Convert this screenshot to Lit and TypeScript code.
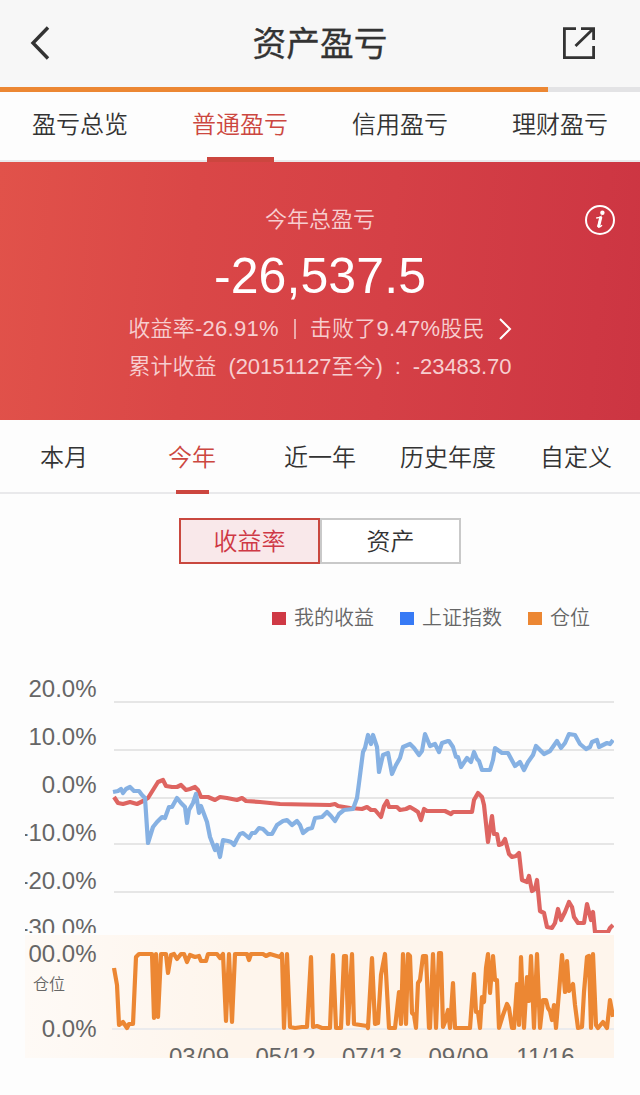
import { LitElement, html, css, svg } from "lit";
import { customElement, state } from "lit/decorators.js";

const GRID = [702, 750, 798, 844, 892];
const LABELS: [number, string][] = [
  [697, "20.0%"], [745, "10.0%"], [793, "0.0%"], [841, "-10.0%"], [888.5, "-20.0%"], [936, "-30.0%"],
];
const DATES: [number, string][] = [
  [199, "03/09"], [285.5, "05/12"], [372, "07/13"], [458.5, "09/09"], [545.5, "11/16"],
];

const INDEX =
  "113,792 118,791 121,789 123,793 126,789 130,787 134,791 139,791 142,795 145,798 148,843 153,827 157,822 162,817 165,818 169,807 172,807 177,798 181,803 185,807 187,823 189,810 193,803 196,794 199,813 201,806 207,822 210,837 215,850 217,845 220,857 223,840 228,841 231,842 234,845 237,839 240,834 243,833 249,838 252,833 255,833 259,828 263,829 268,834 272,834 277,825 283,821 287,820 292,825 297,821 300,825 303,833 308,829 312,828 315,818 322,817 327,812 331,816 335,821 339,814 344,810 353,809 357,798 359,783 363,752 365,748 368,735 371,744 373,735 377,747 379,772 383,755 388,753 392,774 396,765 400,758 403,747 410,744 414,748 419,755 422,751 425,734 430,746 435,744 439,752 442,743 448,741 449,741 453,747 456,757 458,757 461,767 467,758 471,762 474,752 477,759 479,761 482,770 490,770 493,760 495,748 502,753 508,753 515,766 520,762 524,770 528,762 533,755 536,746 544,754 550,751 557,741 561,748 565,743 569,734 575,735 580,744 586,749 590,747 592,742 597,740 599,747 607,743 610,744 613,740";
const MINE =
  "114,797 118,803 123,804 130,802 137,804 143,801 148,798 153,790 158,782 163,780 166,786 172,787 177,787 181,785 186,790 190,789 195,787 198,790 201,797 208,797 215,800 220,797 227,798 237,800 242,798 246,801 260,802 270,803 280,804 303,804.5 330,805 335,804 338,806 350,808 362,809 367,807 371,810 375,810 381,817 384,806 387,801 389,807 397,807 400,810 406,809 410,807 415,810 418,812 421,820 424,809 427,811 445,811 451,814 453,812 472,812 474,800 478,793 482,797 484,805 488,842 492,816 494,834 497,834 499,845 502,844 505,839 509,854 512,857 516,856 519,853 522,880 527,882 529,876 532,891 535,889 537,880 540,911 544,913 547,927 552,928 555,923 558,909 561,920 565,912 569,902 572,907 574,917 578,923 584,923 587,904 591,920 593,912 595,932 608,932 610,928 613,925";
const POSITION =
  "114,968 117,985 119,1025 123,1022 127,1028 129,1024 133,1024 136,957 139,954 152,954 154,1018 156,954 158,1017 161,954 166,954 168,973 171,955 174,954 177,959 181,954 184,954 187,962 190,955 195,957 199,956 201,961 206,961 208,954 217,954 220,958 223,954 226,1021 229,954 232,1022 235,954 247,954 249,960 251,954 263,954 266,956 270,954 280,957 282,954 284,1028 287,954 290,1027 295,1028 302,1027 307,1027 311,957 313,1027 317,1026 322,1028 330,1028 333,955 336,1028 341,1028 344,956 346,956 348,1024 352,954 354,1024 367,1026 368,1028 372,958 375,1024 378,1023 381,975 385,954 389,1028 395,1028 399,992 401,1024 403,954 406,1024 408,954 410,956 412,1013 414,1015 416,1028 418,983 420,980 423,956 426,956 429,1028 430,1028 433,954 436,1028 439,953 441,953 443,1027 445,1022 448,1010 450,1028 453,983 455,1028 470,1028 474,974 476,1012 478,1012 480,1028 482,997 484,1002 486,968 488,954 490,993 493,956 495,980 497,980 499,1028 503,1015 507,1004 509,1008 512,1028 514,1028 517,984 519,1025 521,957 524,1028 527,977 529,1001 531,956 534,1028 537,954 540,1028 543,1000 546,1000 548,1008 550,1011 552,1020 554,1005 556,1028 559,992 562,955 565,992 567,961 569,991 573,984 575,1005 578,1028 582,1027 584,992 587,957 589,956 591,1028 593,954 596,1025 598,1028 603,1022 607,1028 610,1000 613,1017";

@customElement("app-root")
export class AppRoot extends LitElement {
  @state() private section = 1;
  @state() private period = 1;
  @state() private mode = 0;

  static styles = css`
    :host {
      display: flex;
      flex-direction: column;
      height: 1095px;
      background: #fdfdfd;
      color: #333;
      font-family: "Liberation Sans", "Noto Sans CJK SC", sans-serif;
      font-weight: 350;
    }
    * { box-sizing: border-box; }
    .head {
      height: 87px;
      flex: none;
      display: grid;
      grid-template-columns: 78px 1fr 78px;
      align-items: center;
      background: #f7f7f7;
    }
    .head svg { display: block; width: 34px; height: 34px; margin-top: -1px; }
    .back { margin-left: 30px; }
    .title { font-size: 33.7px; line-height: 50px; font-weight: 400; text-align: center; -webkit-text-stroke: .3px #333; }
    .progress { height: 5px; flex: none; background: #e3e3e5; }
    .bar { height: 100%; background: #ec8733; }
    .tabs { display: flex; flex: none; border-bottom: 2px solid #e9e9eb; font-size: 24px; }
    .tab { flex: 1; display: flex; flex-direction: column; align-items: center; white-space: nowrap; cursor: pointer; }
    .tab::after { content: ""; margin-top: auto; margin-bottom: -2px; background: transparent; z-index: 1; }
    .tab.on { color: #cc4740; }
    .tab.on::after { background: #cc463f; }
    .main { height: 70px; line-height: 36px; padding-top: 15px; }
    .main .tab::after { width: 67px; height: 5px; }
    .period { height: 74px; line-height: 36px; padding-top: 20px; }
    .period .tab::after { width: 33px; height: 4px; }
    .hero {
      height: 258px;
      flex: none;
      display: grid;
      grid-template-columns: 60px 1fr 60px;
      padding: 40px 10px 0;
      background: linear-gradient(95deg, #e1524a 0%, #da4747 30%, #d54046 60%, #ce3743 92%, #cc3542 100%);
      color: #f7ced0;
      font-size: 22px;
    }
    .info { width: 32px; height: 32px; margin: 2px 0 0 14px; }
    .summary { grid-column: 2; display: flex; flex-direction: column; align-items: center; white-space: nowrap; }
    .caption { line-height: 36px; }
    .total { font-size: 50px; line-height: 60px; margin-top: 8px; color: #fff; letter-spacing: .1px; }
    .rank { display: flex; align-items: center; line-height: 38px; margin-top: 4px; letter-spacing: .27px; }
    .sep { width: 2px; height: 20px; margin: 0 14px 0 15px; background: #eda9aa; }
    .more { width: 14px; height: 24px; margin-left: 13px; }
    .since { display: flex; line-height: 38px; letter-spacing: -.05px; }
    .range { margin-left: 12px; }
    .colon { margin: 0 12px 0 12px; }
    .modes { display: flex; flex: none; justify-content: center; margin-top: 24px; font-size: 24px; line-height: 44px; text-align: center; }
    .mode { width: 141px; height: 46px; border: 2px solid #c9c9c9; background: #fff; cursor: pointer; }
    .mode.on { border-color: #c9483f; background: #f9e8ea; color: #cf3945; }
    .legend { display: flex; flex: none; justify-content: flex-end; gap: 26px; padding-right: 50px; margin-top: 39px; font-size: 20px; line-height: 30px; color: #666; }
    .key { display: flex; align-items: center; gap: 8px; }
    .swatch { width: 14px; height: 13px; }
    .mine { background: #cf3945; }
    .index { background: #377af5; }
    .pos { background: #ec8733; }
    .chart { display: block; flex: none; width: 640px; height: 462px; }
    .axis { font-size: 24px; fill: #666; }
    .note { font-size: 16px; fill: #666; }
    .grid { stroke: #e6e6e6; stroke-width: 2; }
    .line { fill: none; stroke-width: 4.2; stroke-linejoin: round; }
  `;

  private tabs(names: string[], active: number, pick: (i: number) => void) {
    return names.map((n, i) => html`<div class="tab ${i === active ? "on" : ""}" @click=${() => pick(i)}>${n}</div>`);
  }

  private chart() {
    return html`<svg class="chart" viewBox="0 633 640 462">
      <defs>
        <clipPath id="upper"><rect x="25" y="660" width="589" height="273"/></clipPath>
        <clipPath id="lower"><rect x="25" y="935" width="589" height="123"/></clipPath>
        <linearGradient id="warm"><stop offset="0" stop-color="#fefaf6"/><stop offset=".35" stop-color="#fef5ec"/></linearGradient>
      </defs>
      <g clip-path="url(#upper)">
        ${GRID.map((y) => svg`<line class="grid" x1="114" x2="614" y1=${y} y2=${y} />`)}
        ${LABELS.map(([y, t]) => svg`<text class="axis" x="96.5" y=${y} text-anchor="end">${t}</text>`)}
        <polyline class="line" stroke="#de6561" points=${MINE} />
        <polyline class="line" stroke="#86b1e3" points=${INDEX} />
      </g>
      <g clip-path="url(#lower)">
        <rect x="25" y="935" width="589" height="123" fill="url(#warm)"/>
        <line x1="112" x2="614" y1="1029" y2="1029" stroke="#ebebed" stroke-width="2"/>
        <text class="axis" x="96.5" y="962" text-anchor="end">00.0%</text>
        <text class="axis" x="96.5" y="1037" text-anchor="end">0.0%</text>
        <text class="note" x="33" y="990">仓位</text>
        ${DATES.map(([x, t]) => svg`<text class="axis" x=${x} y="1065" text-anchor="middle">${t}</text>`)}
        <polyline class="line" stroke="#ec8733" points=${POSITION} />
      </g>
    </svg>`;
  }

  render() {
    return html`
      <div class="head">
        <svg class="back" viewBox="0 0 34 34" fill="none" stroke="#333" stroke-width="3.4"><path d="M18 1.5 3 17 18 32.5"/></svg>
        <div class="title">资产盈亏</div>
        <svg viewBox="0 0 34 34" fill="none" stroke="#333" stroke-width="2.8"><path d="M14 2.6H2.4V31.6H31.6V20M19 2.6H31.6V14M31 3 13.5 20"/></svg>
      </div>
      <div class="progress"><div class="bar" style="width:${(548 / 640) * 100}%"></div></div>
      <div class="tabs main">${this.tabs(["盈亏总览", "普通盈亏", "信用盈亏", "理财盈亏"], this.section, (i) => (this.section = i))}</div>
      <div class="hero">
        <div class="summary">
          <div class="caption">今年总盈亏</div>
          <div class="total">-26,537.5</div>
          <div class="rank">
            <span>收益率-26.91%</span><i class="sep"></i><span>击败了9.47%股民</span>
            <svg class="more" viewBox="0 0 14 24" fill="none" stroke="#fff" stroke-width="2"><path d="M2 2 12 12 2 22"/></svg>
          </div>
          <div class="since"><span>累计收益</span><span class="range">(20151127至今)</span><span class="colon">:</span><span>-23483.70</span></div>
        </div>
        <svg class="info" viewBox="0 0 32 32">
          <circle cx="16" cy="16" r="14" fill="none" stroke="#fff" stroke-width="2"/>
          <circle cx="18.4" cy="8.8" r="2.2" fill="#fff"/>
          <path d="M12.2 14Q15 13.8 16.8 12.8L14.3 22Q14 24.6 18 21.2" fill="none" stroke="#fff" stroke-width="1.5"/>
          <path d="M16.9 12.8 14.5 23" stroke="#fff" stroke-width="3"/>
        </svg>
      </div>
      <div class="tabs period">${this.tabs(["本月", "今年", "近一年", "历史年度", "自定义"], this.period, (i) => (this.period = i))}</div>
      <div class="modes">
        ${["收益率", "资产"].map((n, i) => html`<div class="mode ${i === this.mode ? "on" : ""}" @click=${() => (this.mode = i)}>${n}</div>`)}
      </div>
      <div class="legend">
        <div class="key"><i class="swatch mine"></i>我的收益</div>
        <div class="key"><i class="swatch index"></i>上证指数</div>
        <div class="key"><i class="swatch pos"></i>仓位</div>
      </div>
      ${this.chart()}
    `;
  }
}
